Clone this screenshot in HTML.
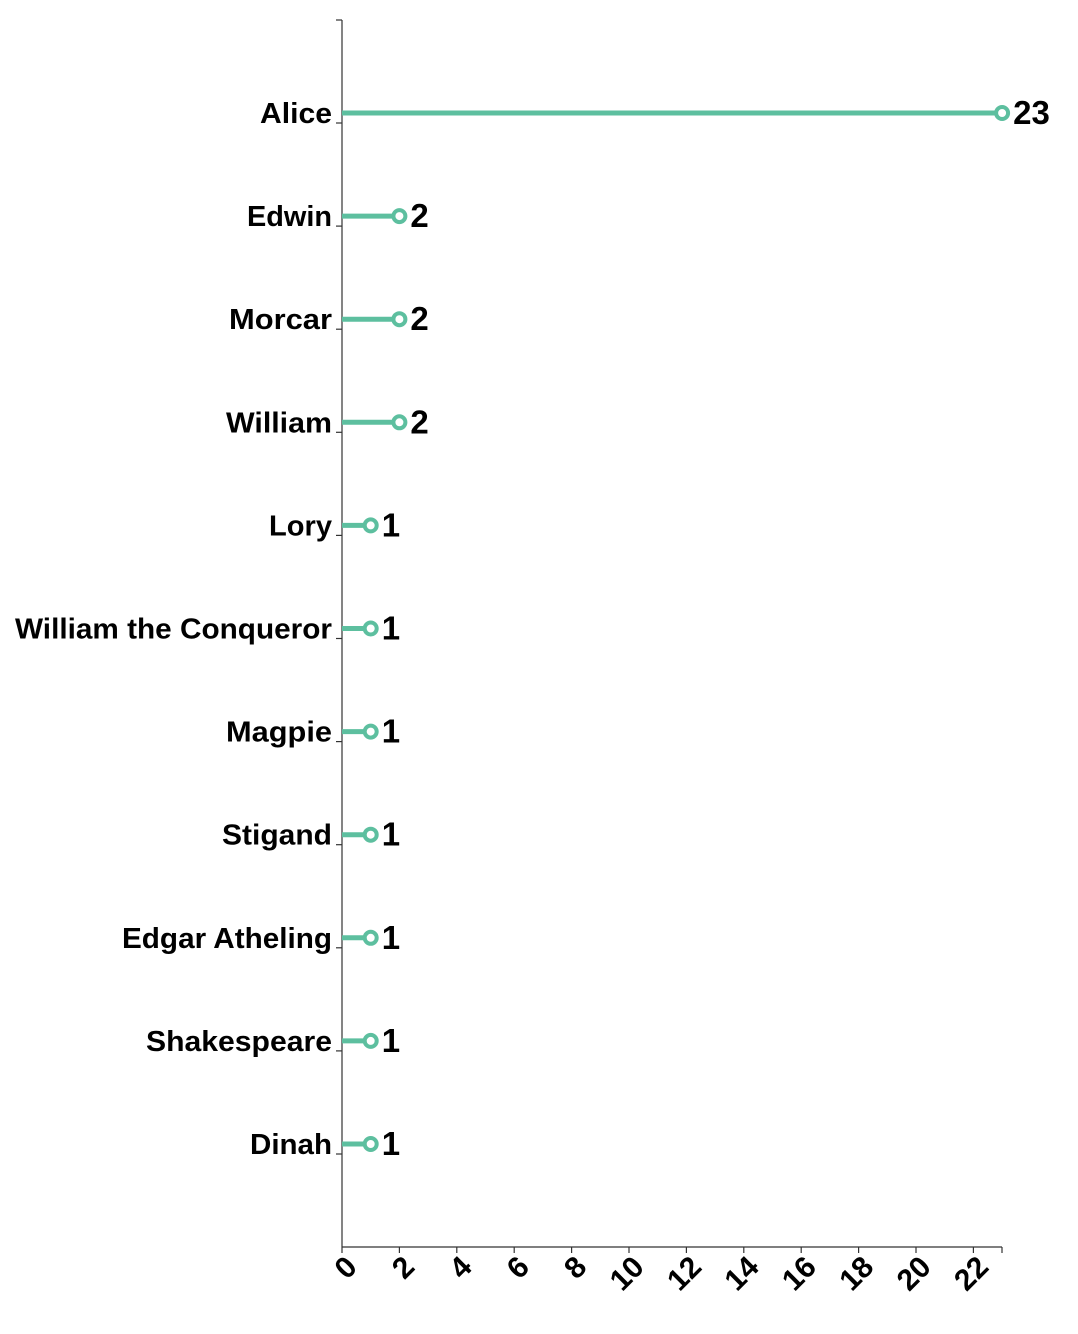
<!DOCTYPE html>
<html><head><meta charset="utf-8"><style>html,body{margin:0;padding:0;background:#fff;}svg{display:block}</style></head>
<body>
<svg width="1078" height="1334" xmlns="http://www.w3.org/2000/svg" font-family="Liberation Sans, Arial, sans-serif" font-weight="bold">
<line x1="342" y1="20" x2="342" y2="1247" stroke="#333" stroke-width="1.2"/>
<line x1="336" y1="20" x2="342" y2="20" stroke="#333" stroke-width="1.2"/>
<line x1="342" y1="1247" x2="1002" y2="1247" stroke="#333" stroke-width="1.2"/>
<line x1="1002" y1="1247" x2="1002" y2="1253" stroke="#333" stroke-width="1.2"/>
<script>
var ns="http://www.w3.org/2000/svg",svg=document.querySelector('svg');
function el(n,a,t){var e=document.createElementNS(ns,n);for(var k in a)e.setAttribute(k,a[k]);if(t!=null)e.textContent=t;svg.appendChild(e);return e;}
var u=28.7,x0=342;
for(var v=0;v<=22;v+=2){var tx=x0+v*u;
el('line',{x1:tx,y1:1247,x2:tx,y2:1253,stroke:'#333','stroke-width':1.2});
el('text',{transform:'translate('+(tx+10)+',1262) rotate(-45)','text-anchor':'end','dominant-baseline':'central','font-size':30},''+v);}
var d=[['Alice',23,72],['Edwin',2,85],['Morcar',2,103],['William',2,106],['Lory',1,63],['William the Conqueror',1,317],['Magpie',1,106],['Stigand',1,110],['Edgar Atheling',1,210],['Shakespeare',1,186],['Dinah',1,82]];
d.forEach(function(r,i){var y=113+i*103.1,cx=x0+r[1]*u;
el('line',{x1:336,y1:y+10,x2:342,y2:y+10,stroke:'#333','stroke-width':1.2});
el('text',{x:332,y:y+10,'text-anchor':'end','font-size':29,textLength:r[2],lengthAdjust:'spacingAndGlyphs'},r[0]);
el('line',{x1:x0,y1:y,x2:cx,y2:y,stroke:'#5dbf9f','stroke-width':5});
el('circle',{cx:cx,cy:y,r:6,fill:'#fff',stroke:'#5dbf9f','stroke-width':4});
el('text',{x:cx+11,y:y+11,'font-size':33},''+r[1]);});
</script>
</svg>
</body></html>
